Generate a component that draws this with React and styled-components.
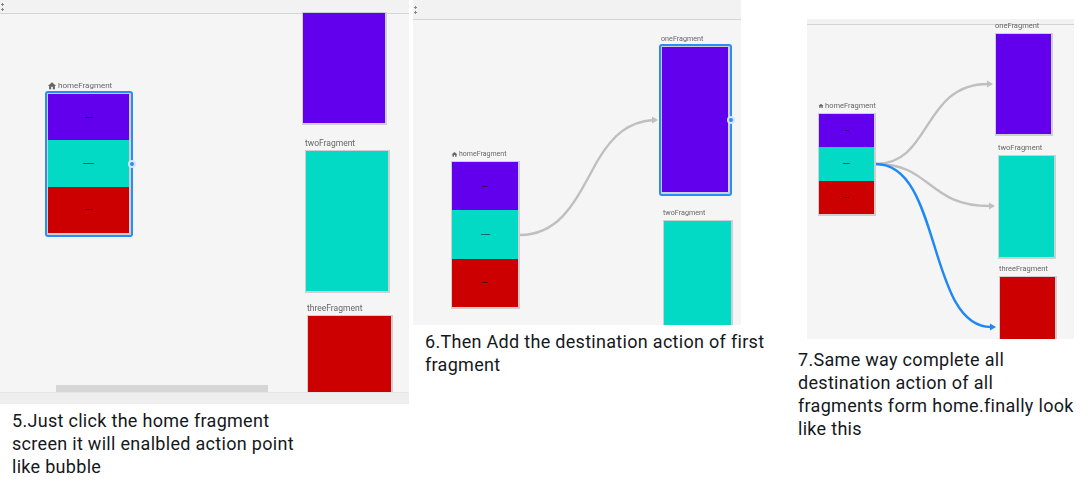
import React from "react";
import styled, { createGlobalStyle } from "styled-components";

const Global = createGlobalStyle`
    html, body {
        margin: 0;
        background: #fff;
    }
    #root {
        width: 1092px;
        height: 485px;
        overflow: hidden;
    }
`;

const Page = styled.div`
    display: flex;
    align-items: flex-start;
    height: 485px;
    font-family: "Roboto", "Liberation Sans", sans-serif;
`;

const Step = styled.section`
    flex: none;
    width: ${(p) => p.$width}px;
    margin-left: ${(p) => p.$left || 0}px;
    padding-top: ${(p) => p.$top || 0}px;
`;

const Canvas = styled.div`
    position: relative;
    overflow: hidden;
    width: ${(p) => p.$width}px;
    height: ${(p) => p.$height}px;
    margin-left: ${(p) => p.$left || 0}px;
    background: #f5f5f5;
`;

const Toolbar = styled.div`
    display: flex;
    align-items: center;
    box-sizing: border-box;
    height: ${(p) => p.$height}px;
    background: #f2f2f2;
    border-bottom: 1px solid #d4d4d4;
`;

const BottomStrip = styled.div`
    height: 12px;
    background: #eeeeee;
    border-top: 1px solid #e6e6e6;
    box-sizing: border-box;
`;

const Scrollbar = styled.div`
    position: absolute;
    left: 56px;
    bottom: 0;
    width: 212px;
    height: 7px;
    background: #d6d6d6;
`;

const Caption = styled.p`
    margin: 0;
    padding: ${(p) => p.$pad};
    width: ${(p) => p.$width}px;
    font-size: 18px;
    line-height: 23px;
    letter-spacing: 0.3px;
    color: #15181c;
`;

/* a destination of the graph: its place on the canvas is the content itself */
const Destination = styled.div`
    position: absolute;
    left: ${(p) => p.$x}px;
    top: ${(p) => p.$y}px;
    display: flex;
    flex-direction: column;
    gap: 2px;
`;

const Label = styled.div`
    display: flex;
    align-items: center;
    gap: ${(p) => p.$gap || 0}px;
    height: 10px;
    font-size: ${(p) => p.$size}px;
    line-height: 10px;
    color: #666;
    white-space: nowrap;
    filter: blur(0.35px);
`;

const Screen = styled.div`
    position: relative;
    box-sizing: border-box;
    display: flex;
    flex-direction: column;
    width: ${(p) => p.$w}px;
    height: ${(p) => p.$h}px;
    border-style: solid;
    border-color: #cfcfcf;
    border-width: 1px 2px 2px 1px;
    outline: ${(p) => (p.$selected ? "2px solid #2a8cf5" : "none")};
    border-radius: ${(p) => (p.$selected ? 1 : 0)}px;
`;

const Segment = styled.div`
    flex: 1;
    display: flex;
    align-items: center;
    justify-content: center;
    background: ${(p) => p.$color};
`;

const Tiny = styled.span`
    width: ${(p) => p.$w}px;
    height: 1px;
    background: rgba(0, 0, 0, 0.5);
`;

const Handle = styled.span`
    position: absolute;
    right: -7px;
    top: 50%;
    width: 8px;
    height: 8px;
    margin-top: -4px;
    box-sizing: border-box;
    border-radius: 50%;
    background: #2a8cf5;
    border: 2px solid #d3e6fb;
`;

const Wires = styled.svg`
    position: absolute;
    left: 0;
    top: 0;
    width: 100%;
    height: 100%;
    pointer-events: none;
`;

const PURPLE = "#6200ee";
const TEAL = "#03dac5";
const RED = "#cc0000";
const GREY = "#bfbfbf";
const BLUE = "#1e88f5";

function ToolGlyph() {
    return (
        <svg width="6" height="10" viewBox="0 0 6 10">
            <path d="M1 2.5h3M2.5 1v3M1 7.5h3M2.5 6v3" stroke="#888" strokeWidth="1" fill="none" />
        </svg>
    );
}

function HomeIcon({ size }) {
    return (
        <svg width={size} height={size} viewBox="0 0 24 24">
            <path d="M10 20v-6h4v6h5v-8h3L12 3 2 12h3v8z" fill="#666" />
        </svg>
    );
}

function HomeNode({ x, y, w, h, bars, size, icon, selected }) {
    return (
        <Destination $x={x} $y={y}>
            <Label $size={size} $gap={1}><HomeIcon size={icon} />homeFragment</Label>
            <Screen $w={w} $h={h} $selected={selected}>
                <Segment $color={PURPLE}><Tiny $w={bars[0]} /></Segment>
                <Segment $color={TEAL}><Tiny $w={bars[1]} /></Segment>
                <Segment $color={RED}><Tiny $w={bars[0]} /></Segment>
                {selected && <Handle />}
            </Screen>
        </Destination>
    );
}

function FragmentNode({ x, y, w, h, name, color, size, selected }) {
    return (
        <Destination $x={x} $y={y}>
            {name && <Label $size={size}>{name}</Label>}
            <Screen $w={w} $h={h} $selected={selected}>
                <Segment $color={color} />
                {selected && <Handle />}
            </Screen>
        </Destination>
    );
}

function Wire({ d, end, color = GREY }) {
    const [x, y] = end;
    return (
        <>
            <path d={d} stroke={color} strokeWidth="2.4" fill="none" />
            <path d={`M${x - 6} ${y - 3.5}L${x} ${y}L${x - 6} ${y + 3.5}z`} fill={color} />
        </>
    );
}

export default function App() {
    return (
        <Page>
            <Global />

            <Step $width={409}>
                <Canvas $width={409} $height={392}>
                    <Toolbar $height={14}><ToolGlyph /></Toolbar>
                    <HomeNode x={47} y={81} w={84} h={142} bars={[8, 11]} size={8} icon={10} selected />
                    <FragmentNode x={302} y={12} w={85} h={113} color={PURPLE} />
                    <FragmentNode x={305} y={138} w={85} h={143} name="twoFragment" color={TEAL} size={8.5} />
                    <FragmentNode x={307} y={303} w={86} h={100} name="threeFragment" color={RED} size={8.5} />
                    <Scrollbar />
                </Canvas>
                <BottomStrip />
                <Caption $pad="5px 0 0 12px" $width={300}>
                    5.Just click the home fragment screen it will enalbled action point like bubble
                </Caption>
            </Step>

            <Step $width={356} $left={4}>
                <Canvas $width={328} $height={325}>
                    <Toolbar $height={20}><ToolGlyph /></Toolbar>
                    <HomeNode x={38} y={149} w={69} h={148} bars={[6, 9]} size={7} icon={7} />
                    <FragmentNode x={248} y={34} w={69} h={148} name="oneFragment" color={PURPLE} size={7.2} selected />
                    <FragmentNode x={250} y={208} w={70} h={130} name="twoFragment" color={TEAL} size={7.2} />
                    <Wires viewBox="0 0 328 325">
                        <Wire d="M107 235C150 235 165 195 185 160C200 135 215 122 240 120" end={[245, 120]} />
                    </Wires>
                </Canvas>
                <Caption $pad="5px 0 0 12px" $width={344}>
                    6.Then Add the destination action of first fragment
                </Caption>
            </Step>

            <Step $width={294} $left={29} $top={19}>
                <Canvas $width={267} $height={320} $left={9}>
                    <Toolbar $height={6} />
                    <HomeNode x={11} y={82} w={58} h={103} bars={[4, 7]} size={7.5} icon={6} />
                    <FragmentNode x={188} y={2} w={58} h={103} name="oneFragment" color={PURPLE} size={7.5} />
                    <FragmentNode x={191} y={124} w={58} h={104} name="twoFragment" color={TEAL} size={7.5} />
                    <FragmentNode x={192} y={245} w={58} h={90} name="threeFragment" color={RED} size={7.5} />
                    <Wires viewBox="0 0 267 320">
                        <Wire d="M69 145C125 145 115 65 181 65" end={[186, 65]} />
                        <Wire d="M69 145C125 145 120 187 183 187" end={[188, 187]} />
                        <Wire d="M69 145C135 145 120 308 184 308" end={[189, 308]} color={BLUE} />
                    </Wires>
                </Canvas>
                <Caption $pad="9px 0 0 0" $width={280}>
                    7.Same way complete all destination action of all fragments form home.finally look like this
                </Caption>
            </Step>
        </Page>
    );
}
